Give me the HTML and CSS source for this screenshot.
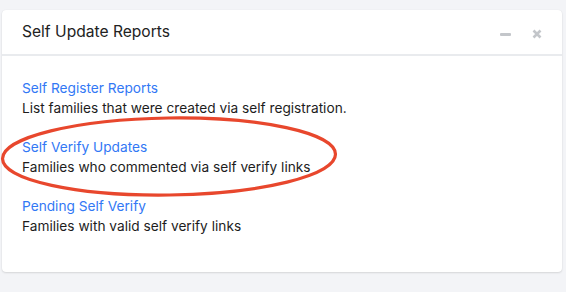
FILE: index.html
```html
<!DOCTYPE html>
<html>
<head>
<meta charset="utf-8">
<link rel="stylesheet" href="styles.css">
</head>
<body>
<div class="page">
  <div class="card">
    <div class="card-header">
      <h5 class="card-title">Self Update Reports</h5>
      <div class="tools">
        <span class="tool-min"></span>
        <svg class="tool-close" width="10" height="10" viewBox="0 0 10 10"><path d="M1.5 1.5 L8.5 8.5 M8.5 1.5 L1.5 8.5" stroke="#c3c6ca" stroke-width="2.6" stroke-linecap="butt"/></svg>
      </div>
    </div>
    <div class="card-body">
      <div class="item">
        <a class="item-link">Self Register Reports</a>
        <div class="item-desc">List families that were created via self registration.</div>
      </div>
      <div class="item">
        <a class="item-link">Self Verify Updates</a>
        <div class="item-desc">Families who commented via self verify links</div>
      </div>
      <div class="item">
        <a class="item-link">Pending Self Verify</a>
        <div class="item-desc">Families with valid self verify links</div>
      </div>
    </div>
  </div>
  <svg class="annotation" width="566" height="292" viewBox="0 0 566 292">
    <ellipse cx="169" cy="156.5" rx="166.5" ry="38.5" fill="none" stroke="#e8472d" stroke-width="3.2" transform="rotate(-0.8 169 156.5)"/>
  </svg>
</div>
</body>
</html>
```

FILE: styles.css
```css
html, body {
  margin: 0;
  padding: 0;
  background: #f3f4f7;
}
.page {
  position: relative;
  width: 566px;
  height: 292px;
  padding: 10px 4px 0 2px;
  box-sizing: border-box;
  font-family: Inter, "Liberation Sans", Arial, sans-serif;
}
.card {
  background: #fff;
  border-radius: 4px;
  box-shadow: 0 1px 2px rgba(0,0,0,0.12), 0 0 1px rgba(0,0,0,0.08);
  height: 262px;
  box-sizing: border-box;
}
.card-header {
  display: flex;
  align-items: center;
  justify-content: space-between;
  height: 46px;
  padding: 0 20px;
  border-bottom: 2px solid #e9ebee;
  box-sizing: border-box;
}
.card-title {
  margin: 0;
  font-size: 15.6px;
  font-weight: normal;
  color: #222;
  position: relative;
  top: -1px;
}
.tools {
  display: flex;
  align-items: center;
  gap: 21px;
  position: relative;
  top: 2px;
}
.tool-min {
  display: block;
  width: 11px;
  height: 3px;
  background: #c3c6ca;
  border-radius: 1px;
}
.tool-close {
  display: block;
}
.card-body {
  padding: 22px 20px 0 20px;
  display: flex;
  flex-direction: column;
  gap: 19px;
}
.item-link {
  display: block;
  color: #3278f5;
  font-size: 13.7px;
  line-height: 20px;
  text-decoration: none;
}
.item-desc {
  color: #1d1d1d;
  font-size: 13.7px;
  line-height: 20px;
}
.annotation {
  position: absolute;
  left: 0;
  top: 0;
  pointer-events: none;
}
```
